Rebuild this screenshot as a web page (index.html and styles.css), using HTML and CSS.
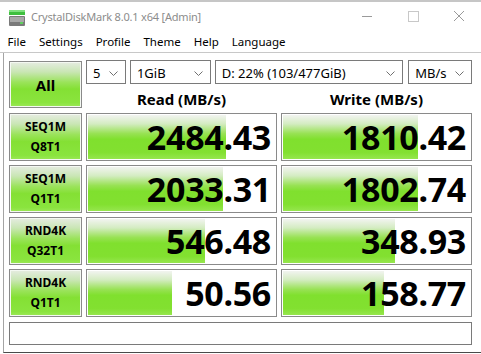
FILE: index.html
```html
<!DOCTYPE html>
<html lang="en">
<head>
  <meta charset="UTF-8">
  <title>CrystalDiskMark 8.0.1 x64 [Admin]</title>
  <link rel="stylesheet" href="styles.css">
</head>
<body>

  <div class="window">
    <div class="titlebar">
      <svg class="app-icon" width="16" height="16" viewBox="0 0 16 16">
        <rect x="0" y="0" width="16" height="5" fill="#3fbf3f"/>
        <rect x="0" y="0" width="16" height="2" fill="#7fe07f"/>
        <rect x="0" y="6" width="16" height="10" rx="1" fill="#7a7a7a"/>
        <rect x="1" y="7" width="14" height="5" fill="#a8a8a8"/>
        <rect x="11" y="12" width="3" height="2" fill="#5fd05f"/>
      </svg>
      <span class="title">CrystalDiskMark 8.0.1 x64 [Admin]</span>
      <div class="controls">
        <svg width="46" height="29" viewBox="0 0 46 29"><line x1="18" y1="14.5" x2="28" y2="14.5" stroke="#9a9a9a" stroke-width="1"/></svg>
        <svg width="46" height="29" viewBox="0 0 46 29"><rect x="18.5" y="9.5" width="10" height="10" fill="none" stroke="#c8c8c8" stroke-width="1"/></svg>
        <svg width="46" height="29" viewBox="0 0 46 29"><path d="M18 9 L28 19 M28 9 L18 19" stroke="#9a9a9a" stroke-width="1"/></svg>
      </div>
    </div>

    <div class="menubar">
      <span>File</span>
      <span>Settings</span>
      <span>Profile</span>
      <span>Theme</span>
      <span>Help</span>
      <span>Language</span>
    </div>

    <div class="client">
      <div class="top">
        <div class="btn all">All</div>
        <div class="top-right">
          <div class="combos">
            <div class="combo c-count"><span>5</span><svg width="9" height="5" viewBox="0 0 9 5"><path d="M0.5 0.5 L4.5 4.5 L8.5 0.5" fill="none" stroke="#707070"/></svg></div>
            <div class="combo c-size"><span>1GiB</span><svg width="9" height="5" viewBox="0 0 9 5"><path d="M0.5 0.5 L4.5 4.5 L8.5 0.5" fill="none" stroke="#707070"/></svg></div>
            <div class="combo c-drive"><span>D: 22% (103/477GiB)</span><svg width="9" height="5" viewBox="0 0 9 5"><path d="M0.5 0.5 L4.5 4.5 L8.5 0.5" fill="none" stroke="#707070"/></svg></div>
            <div class="combo c-unit"><span>MB/s</span><svg width="9" height="5" viewBox="0 0 9 5"><path d="M0.5 0.5 L4.5 4.5 L8.5 0.5" fill="none" stroke="#707070"/></svg></div>
          </div>
          <div class="heads">
            <div class="head">Read (MB/s)</div>
            <div class="head">Write (MB/s)</div>
          </div>
        </div>
      </div>

      <div class="grid">
        <div class="btn label">SEQ1M<br>Q8T1</div>
        <div class="cell" style="--fill: 138px">2484.43</div>
        <div class="cell" style="--fill: 135px">1810.42</div>

        <div class="btn label">SEQ1M<br>Q1T1</div>
        <div class="cell" style="--fill: 135px">2033.31</div>
        <div class="cell" style="--fill: 135px">1802.74</div>

        <div class="btn label">RND4K<br>Q32T1</div>
        <div class="cell" style="--fill: 117px">546.48</div>
        <div class="cell" style="--fill: 112px">348.93</div>

        <div class="btn label">RND4K<br>Q1T1</div>
        <div class="cell" style="--fill: 84px">50.56</div>
        <div class="cell" style="--fill: 101px">158.77</div>
      </div>

      <div class="comment"></div>
    </div>
  </div>

</body>
</html>
```

FILE: styles.css
```css
body {
  margin: 0;
  padding: 0;
  background-color: #ffffff;
  font-family: 'Noto Sans', 'Open Sans', sans-serif;
  color: #000000;
}

.window {
  width: 481px;
  height: 354px;
  border-top: 2px solid #c6c6c6;
  box-sizing: border-box;
  overflow: hidden;
}

.titlebar {
  height: 29px;
  display: flex;
  align-items: center;
  padding-left: 9px;
  background-color: #ffffff;
}

.app-icon {
  margin-top: 2px;
}

.title {
  margin-left: 6px;
  font-size: 11px;
  letter-spacing: -0.2px;
  color: #8c8c8c;
}

.controls {
  margin-left: auto;
  display: flex;
  margin-right: -1px;
}

.menubar {
  height: 21px;
  display: flex;
  align-items: center;
  padding-left: 1px;
  font-size: 11.5px;
  border-bottom: 1px solid #c8c8c8;
}

.menubar span {
  padding: 0 6.5px;
}

.client {
  height: 300px;
  margin-left: 3px;
  border-left: 1px solid #a4a4a4;
  border-bottom: 1px solid #4a4a4a;
  padding: 7px 0 0 5px;
  box-sizing: border-box;
}

.top {
  display: flex;
  gap: 4px;
}

.btn {
  box-sizing: border-box;
  border: 1px solid #8a8a8a;
  box-shadow: inset 0 0 0 1px #f4f8f2;
  background: linear-gradient(to bottom, #e6ece2 0%, #c9e6b4 22%, #9ae35a 45%, #84e034 60%, #8ae43e 90%, #9ce858 100%);
  display: flex;
  align-items: center;
  justify-content: center;
  text-align: center;
  font-weight: bold;
}

.all {
  width: 73px;
  height: 47px;
  margin-top: 1px;
  font-size: 15px;
}

.top-right {
  width: 386px;
}

.combos {
  display: flex;
  gap: 4px;
  height: 24px;
}

.combo {
  box-sizing: border-box;
  border: 1px solid #7a7a7a;
  background-color: #ffffff;
  display: flex;
  align-items: center;
  justify-content: space-between;
  padding: 2px 7px 0 6px;
  font-size: 13px;
}

.c-count { width: 40px; }
.c-size { width: 81px; }
.c-drive { width: 189px; }
.c-unit { width: 64px; margin-left: 1px; }

.heads {
  display: flex;
  gap: 4px;
  height: 29px;
  align-items: center;
}

.head {
  width: 191px;
  text-align: center;
  font-weight: bold;
  font-size: 15px;
  padding-top: 1px;
}

.grid {
  display: grid;
  grid-template-columns: 73px 191px 191px;
  grid-auto-rows: 48px;
  gap: 4px;
}

.label {
  font-size: 12px;
  line-height: 20px;
}

.cell {
  box-sizing: border-box;
  border: 1px solid #8a8a8a;
  background:
    linear-gradient(to bottom, #f2f4f0 0%, #d4ecc2 20%, #98e254 42%, #80e02e 55%, #82e030 85%, #96e64e 100%) 1px 1px / var(--fill) calc(100% - 2px) no-repeat,
    #ffffff;
  display: flex;
  align-items: center;
  justify-content: flex-end;
  padding-right: 5px;
  font-weight: bold;
  font-size: 34px;
  letter-spacing: -0.3px;
}

.comment {
  margin-top: 5px;
  width: 463px;
  height: 23px;
  box-sizing: border-box;
  border: 1px solid #7a7a7a;
  background-color: #ffffff;
}
```
